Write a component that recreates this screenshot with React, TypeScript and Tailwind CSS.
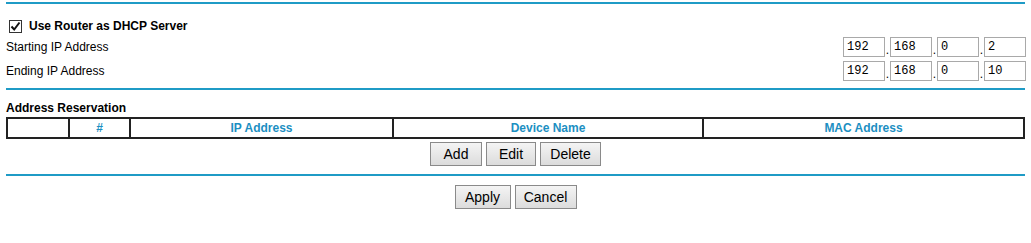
import { useState } from "react";

const rule = "mx-[6px] h-[2px] bg-[#1f9bc6]";

function IpField({ parts }: { parts: string[] }) {
  return (
    <div className="flex items-end">
      {parts.map((p, i) => (
        <div key={i} className="flex items-end">
          {i > 0 && <span className="w-[5px] text-center text-[12px] leading-[14px]">.</span>}
          <input
            defaultValue={p}
            className="w-[42px] h-[20px] border border-[#a9a9a9] px-[3px] text-[12px] font-['Liberation_Mono',monospace] text-black outline-none"
          />
        </div>
      ))}
    </div>
  );
}

function Btn({ label, w }: { label: string; w: string }) {
  return (
    <button
      className={`${w} h-[24px] border border-[#8a8a8a] bg-gradient-to-b from-[#f4f4f4] to-[#dcdcdc] text-[14px] text-black`}
    >
      {label}
    </button>
  );
}

export default function App() {
  const [dhcp, setDhcp] = useState(true);

  return (
    <div className="w-[1031px] h-[243px] bg-white text-black font-['Liberation_Sans',Arial,sans-serif] text-[12px] pt-[2px]">
      <div className={rule} />

      <label
        className="mt-[15px] ml-[9px] flex items-center gap-[7px] font-bold text-[12px] leading-[14px] cursor-pointer"
        onClick={() => setDhcp(!dhcp)}
      >
        <span className="w-[13px] h-[13px] border border-[#333] bg-white flex items-center justify-center">
          {dhcp && (
            <svg width="11" height="11" viewBox="0 0 11 11">
              <path d="M1.5 5.5 L4.2 8.5 L9.5 1.5" fill="none" stroke="#111" strokeWidth="2" />
            </svg>
          )}
        </span>
        Use Router as DHCP Server
      </label>

      <div className="mt-[4px] pl-[6px] pr-[5px] flex flex-col gap-[4px]">
        <div className="flex items-center justify-between">
          <span>Starting IP Address</span>
          <IpField parts={["192", "168", "0", "2"]} />
        </div>
        <div className="flex items-center justify-between">
          <span>Ending IP Address</span>
          <IpField parts={["192", "168", "0", "10"]} />
        </div>
      </div>

      <div className={`${rule} mt-[7px]`} />

      <div className="px-[6px]">
        <div className="mt-[11px] font-bold leading-[14px]">Address Reservation</div>
        <table className="mt-[2px] w-full border-collapse border-2 border-[#222] table-fixed">
          <thead>
            <tr className="h-[18px] text-[#1c8fc2] font-bold">
              <th className="w-[62px] border-2 border-[#222]"></th>
              <th className="w-[61px] border-2 border-[#222]">#</th>
              <th className="w-[263px] border-2 border-[#222]">IP Address</th>
              <th className="w-[310px] border-2 border-[#222]">Device Name</th>
              <th className="border-2 border-[#222]">MAC Address</th>
            </tr>
          </thead>
        </table>
      </div>

      <div className="mt-[3px] flex justify-center gap-[4px]">
        <Btn label="Add" w="w-[52px]" />
        <Btn label="Edit" w="w-[50px]" />
        <Btn label="Delete" w="w-[61px]" />
      </div>

      <div className={`${rule} mt-[8px]`} />

      <div className="mt-[9px] flex justify-center gap-[4px]">
        <Btn label="Apply" w="w-[56px]" />
        <Btn label="Cancel" w="w-[62px]" />
      </div>
    </div>
  );
}
